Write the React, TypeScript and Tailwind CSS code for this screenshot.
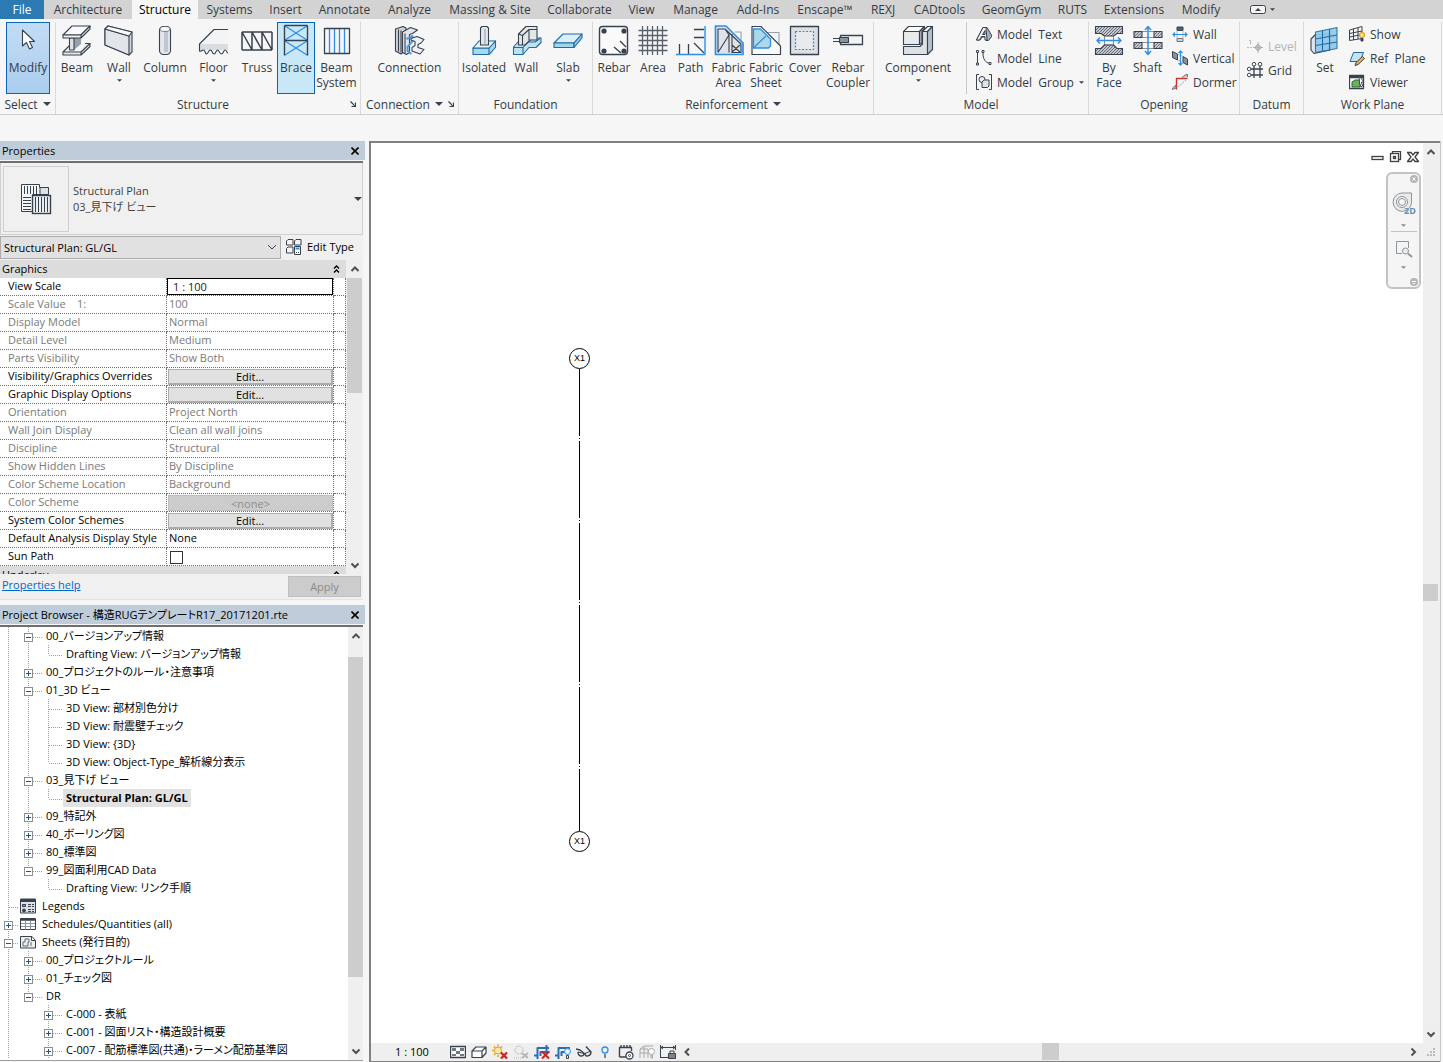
import React from "react";

type Kids = { children?: React.ReactNode };

const INK = "#38424f";
const BLUE = "#2f8fe8";

/* ---------- icon frames ---------- */

function Big({ children }: Kids) {
  return (
    <svg viewBox="0 0 32 32" className="h-8 w-8 shrink-0" fill="none" stroke={INK} strokeWidth="1.1" strokeLinejoin="round" aria-hidden="true">
      {children}
    </svg>
  );
}

function Small({ children }: Kids) {
  return (
    <svg viewBox="0 0 16 16" className="h-4 w-4 shrink-0" fill="none" stroke={INK} strokeWidth="1" strokeLinejoin="round" aria-hidden="true">
      {children}
    </svg>
  );
}

function Hatch({ id, color = "#5d646c" }: { id: string; color?: string }) {
  return (
    <pattern id={id} width="3" height="3" patternUnits="userSpaceOnUse">
      <rect width="3" height="3" fill="#c3c7cc" stroke="none" />
      <path d="M0 3L3 0" stroke={color} strokeWidth="0.8" />
    </pattern>
  );
}

function Triangle({ small = false }: { small?: boolean }) {
  return (
    <svg viewBox="0 0 8 4" className={small ? "h-[3px] w-[5px]" : "h-1 w-2"} fill={INK} aria-hidden="true">
      <path d="M0 0h8L4 4z" />
    </svg>
  );
}

function Launcher() {
  return (
    <svg viewBox="0 0 6 6" className="h-1.5 w-1.5" fill="none" stroke={INK} aria-hidden="true">
      <path d="M0.500 0.500L5 5M5.500 1.500v4h-4" strokeWidth="1.200" />
    </svg>
  );
}

function Chevron({ dir }: { dir: "up" | "down" | "left" | "right" }) {
  const paths = {
    up: "M1.500 7L5 3.500L8.500 7",
    down: "M1.500 3.500L5 7L8.500 3.500",
    left: "M7 1.500L3.500 5L7 8.500",
    right: "M3.500 1.500L7 5L3.500 8.500",
  };
  return (
    <svg viewBox="0 0 10 10" className="h-2.5 w-2.5" fill="none" stroke="#505050" strokeWidth="2" aria-hidden="true">
      <path d={paths[dir]} />
    </svg>
  );
}

/* ---------- ribbon icons ---------- */

const icons = {
  cursor: (
    <Big>
      <path d="M10.500 6v16l4-3.500 3 6.500 3-1.500-3-6h5z" fill="#fff" />
    </Big>
  ),
  beam: (
    <Big>
      <path d="M20 13v7L13 26V13z" fill="#98a0a9" stroke="none" />
      <path d="M2 28l6-6h3M20 28v3H2v-3h18l9-8.500v3L20 31M20 28l9-8.500h-5" fill="#e9ecef" />
      <path d="M8.500 14h4.500v12H8.500z" fill="#dfe3e7" />
      <path d="M2 11l9-9h18l-9 9z" fill="#f8f9fa" />
      <path d="M2 11h18v3H2zM20 11l9-9v3l-9 9" fill="#eceef1" />
    </Big>
  ),
  wall: (
    <Big>
      <path d="M2 5l3-3 24 6v20l-3 3L2 21z" fill="#d3d8de" />
      <path d="M2 5l24 7v19L2 21z" fill="#e2e5e9" />
      <path d="M2 5l3-3 24 6-3 4z" fill="#fafafa" />
    </Big>
  ),
  column: (
    <Big>
      <rect x="10.500" y="2.500" width="11" height="28" rx="4" fill="#e4e7ea" />
      <rect x="15" y="7" width="4" height="21" fill="#bfc6cd" stroke="none" />
      <ellipse cx="16" cy="5" rx="5" ry="2.500" fill="#fafafa" strokeWidth="0.600" />
    </Big>
  ),
  floor: (
    <Big>
      <path d="M1.500 20L16 5.500h14V29c-1.500 0-1.500-3-3-3s-2 4-4 4-1.500-4-3.500-4-2 4-4 4-1.500-4-3.500-4-1.500 4-3.500 4-1-4-3-4-2 2-3.500 1z" fill="#f3f4f6" stroke="none" />
      <path d="M1.500 20H30v6H1.500z" fill="#d9dde1" stroke="none" />
      <path d="M30 5.500H16L1.500 20v7c1.500 1 2-1 4-1s1.500 4 3 4 2-4 4-4 1.500 4 3.500 4 2-4 3.500-4 2 4 4 4 2-4 3.500-4 2 3 3 3" />
    </Big>
  ),
  truss: (
    <Big>
      <path d="M1 8h30M1 26h30M1 8v18M11 8v18M21 8v18M31 8v18M1 8l10 18M11 8l10 18M21 8l10 18" strokeWidth="1.500" />
    </Big>
  ),
  brace: (
    <Big>
      <path d="M5 2l22 14M27 2L5 16M5 17l22 14M27 17L5 31" stroke={BLUE} strokeWidth="1.300" />
      <path d="M4.500 1.500v30M27.500 1.500v30M4.500 1.500h23M4.500 16.500h23" strokeWidth="1.400" />
    </Big>
  ),
  beamSystem: (
    <Big>
      <path d="M8.500 5v24M13.500 5v24M18.500 5v24M23.500 5v24" stroke={BLUE} strokeWidth="1.300" />
      <rect x="3.500" y="4.500" width="25" height="25" strokeWidth="1.300" />
    </Big>
  ),
  connection: (
    <Big>
      <path d="M1.500 5L9 2.500l3 1.500v22l-5 4-5.500-3z" fill="#cfd4da" />
      <path d="M4.500 5.500v22M7 6.500v22" />
      <path d="M8.500 8l8-4.500 7 2.500-5 3.500-3 1v18l-3 2-4-2z" fill="#e2e5e9" />
      <path d="M11 9.500v20" />
      <path d="M12.500 15l6-3v5l-5 6v4l4 3" stroke="#4d9be8" strokeWidth="2" />
      <path d="M17 14.500l6-2 7 3-3 3.500-3 1.500v3l6 2-4 4.500-8-3v-3.500l3-2v-4l-4-1.500z" fill="#eef2f7" />
    </Big>
  ),
  isolated: (
    <Big>
      <path d="M5 24l6-8h17l-3 8v6.500H5z" fill="#c9e8f4" stroke="none" />
      <path d="M5 24h16l6.500-7v6.500L21 30.500H5zM21 24v6.500" fill="#a8d8ea" stroke="#1f6aa8" />
      <path d="M5 24l6-7h16.500L21 24z" fill="#e4f4fa" stroke="#1f6aa8" />
      <path d="M12.500 4l1.500-1.500h5L20.500 4v17h-8z" fill="#e4e7ea" />
      <path d="M16 5h2v15h-2z" fill="#b8bfc7" stroke="none" />
    </Big>
  ),
  wallFooting: (
    <Big>
      <path d="M2.500 23l4.500-5 9 1 5-5h9v4.500l-5 5h-7l-6 7H2.500z" fill="#bfe2f0" stroke="#1f6aa8" />
      <path d="M2.500 23.500H12l5-5.500h7l5.500-4M12 23.500v6.500" stroke="#1f6aa8" />
      <path d="M7.500 10L15 2.500h11V16h-7l-5 5H7.500z" fill="#e4e7ea" />
      <path d="M7.500 10l4 1.500V21M11.500 11.500L18 5.500h8M18 5.500V16" />
    </Big>
  ),
  slab: (
    <Big>
      <path d="M2 19L11 10h19l-8 9z" fill="#d9f0f8" stroke="#1f6aa8" />
      <path d="M2 19h20v4.500H2z" fill="#a3d6ea" stroke="#1f6aa8" />
      <path d="M22 19l8-9v4l-8 9.500z" fill="#8fc7e0" stroke="#1f6aa8" />
    </Big>
  ),
  rebar: (
    <Big>
      <rect x="1.500" y="2.500" width="28" height="28" rx="3" strokeWidth="1.400" fill="#fafafa" />
      <g fill={INK} stroke="none">
        <circle cx="6" cy="7" r="2.600" />
        <circle cx="26" cy="7" r="2.600" />
        <circle cx="6" cy="27" r="2.600" />
        <circle cx="26" cy="27" r="2.600" />
      </g>
      <path d="M16 23l7 6M22 17l6 6" strokeWidth="1.400" />
    </Big>
  ),
  area: (
    <Big>
      <path d="M5.500 2v29M10.500 2v29M15.500 2v29M20.500 2v29M25.500 2v29M1.500 6.500h29M1.500 11.500h29M1.500 16.500h29M1.500 21.500h29M1.500 26.500h29" strokeWidth="1.300" stroke="#59616b" />
    </Big>
  ),
  path: (
    <Big>
      <path d="M19 5.500h10M19 13.500h10M4.500 20v10M13.500 20v10M19 19l10 10" strokeWidth="1.300" />
      <path d="M1 30.500h29V2" stroke={BLUE} strokeWidth="1.400" />
    </Big>
  ),
  fabricArea: (
    <Big>
      <path d="M22 8h6v14" stroke="#9aa1a9" />
      <path d="M2.500 2H13l17 17v11.500H2.500z" fill="#dfe3e8" stroke={BLUE} strokeWidth="1.700" />
      <path d="M5 28.500V5h7l4 6L5 28.500M16 10v18.500M19 10v18.500h9V20L12 5M19 21l8 7M19 28l8-7" strokeWidth="1.100" />
    </Big>
  ),
  fabricSheet: (
    <Big>
      <path d="M13 8.500h16V20" stroke="#9aa1a9" />
      <path d="M2 2.500h9L30.500 22v8.500H2z" strokeWidth="1.200" fill="#f8f9fa" />
      <path d="M3.500 5h7l10 10v7l-2 2h-15z" fill="#acd8ea" stroke={BLUE} strokeWidth="1.300" />
      <path d="M3.500 24L16 12" stroke={BLUE} strokeWidth="1.300" />
    </Big>
  ),
  cover: (
    <Big>
      <rect x="1.500" y="2.500" width="28" height="28" fill="#dcdfe4" strokeWidth="1.300" />
      <rect x="6.500" y="7.500" width="18" height="18" stroke={BLUE} strokeWidth="1.200" strokeDasharray="2 1.500" fill="#e8eaed" />
    </Big>
  ),
  coupler: (
    <Big>
      <rect x="8.500" y="11.500" width="22" height="9" strokeWidth="1.300" fill="#f3f4f5" />
      <path d="M1 14.500h8M1 17.500h8" />
      <rect x="7.500" y="13.500" width="9" height="5" fill="#8a929b" />
    </Big>
  ),
  component: (
    <Big>
      <path d="M1.500 7.500h16v13h-16z" fill="#e8eaed" />
      <path d="M1.500 7.500l5-5h16l-5 5z" fill="#fcfcfc" />
      <path d="M17.500 7.500l5-5V5l-2.500 2.500V19l-2.500 1.500z" fill="#a9b1ba" />
      <path d="M20.500 7.500h5v23h-24v-8H18l2.500-2.500z" fill="#dde0e4" />
      <path d="M20.500 7.500l5-5h5l-5 5z" fill="#fcfcfc" />
      <path d="M25.500 7.500l5-5v23l-5 5z" fill="#b7bfc8" />
    </Big>
  ),
  byFace: (
    <Big>
      <defs><Hatch id="hatch-face" color="#4c545d" /></defs>
      <path d="M11.500 11h9v10h-9z" fill="#f7f7f7" stroke="#8c939b" />
      <path d="M2.500 2.500h27v7H24l-3.500 2.500h-9L8 9.500H2.500zM2.500 30.500h27v-6H24L20.500 21h-9L8 24.500H2.500z" fill="url(#hatch-face)" />
      <path d="M4 16.500h24M7 13.500l-3 3 3 3M25 13.500l3 3-3 3" stroke={BLUE} strokeWidth="1.500" />
    </Big>
  ),
  shaft: (
    <Big>
      <defs><Hatch id="hatch-shaft" /></defs>
      <path d="M2 7.500h28M2 13.500h28M2 18.500h28M2 24.500h28" stroke="#8c939b" />
      <path d="M2 7.500h8v6H2zM22 7.500h8v6h-8zM2 18.500h8v6H2zM22 18.500h8v6h-8z" fill="url(#hatch-shaft)" />
      <path d="M16 3v27M13 6l3-3.500L19 6M13 27l3 3.500 3-3.500" stroke={BLUE} strokeWidth="1.500" />
    </Big>
  ),
  set: (
    <Big>
      <path d="M2 15l4-4 15-1v16L5 29.500 2 26z" fill="#dfe5ea" />
      <path d="M6.500 8L28 3.500v21L6.500 28.500z" fill="#8ec9e8" stroke="#1f6aa8" opacity="0.900" />
      <path d="M13.500 6.500v20.500M20.500 5v21M6.500 15L28 11M6.500 21.500L28 18" stroke="#1f6aa8" />
    </Big>
  ),
  text: (
    <Small>
      <path d="M0.500 14L7 1.500h4L16 10l-3.500 4.500H10V11H6l-2 3z" fill="#a9b1ba" />
      <path d="M0.500 14L7 1.500h3l1 12.500H9V10.500H5.500L3.500 14zM6.500 8.500H9V4.500z" fill="#f4f5f6" />
    </Small>
  ),
  line: (
    <Small>
      <path d="M1.500 3v10M7 3c0 6 2 9.500 7 10.500" />
      <path d="M0.500 0.500h2v2h-2zM0.500 13h2v2h-2zM6 0.500h2v2H6zM13 12.500h2v2h-2z" fill="#fff" />
    </Small>
  ),
  group: (
    <Small>
      <path d="M3 0.500H0.500v15H3M13 0.500h2.500v15H13" />
      <circle cx="6" cy="5.500" r="3" fill="#eceef0" />
      <path d="M6 8l2-2h5v6l-1.500 1.500H6z" fill="#dfe3e7" />
    </Small>
  ),
  openWall: (
    <Small>
      <path d="M5 1h6v3.500H5z" fill="#555d66" />
      <path d="M5 12.500h6v3H5z" fill="#d0d4d8" stroke="#6d757e" />
      <path d="M5 4.500v8M11 4.500v8" stroke="#b5bac0" />
      <path d="M1 8.500h14M3 6.500l-2 2 2 2M13 6.500l2 2-2 2" stroke={BLUE} strokeWidth="1.200" />
    </Small>
  ),
  vertical: (
    <Small>
      <path d="M0.500 1.500l5 2.500v6l-5-2.500zM11 6.500l4.500 2.500v6L11 12.500z" fill="#8a929b" />
      <path d="M5.500 4l5.500 2.500M5.500 10l5.500 2.500" stroke="#b5bac0" />
      <path d="M8.500 1v14M6.500 3l2-2 2 2M6.500 13l2 2 2-2" stroke={BLUE} strokeWidth="1.200" />
    </Small>
  ),
  dormer: (
    <Small>
      <path d="M10 3.500L14 0.500h1.500v2.500M0.500 15.500V14l3.500-3v3z" stroke="#6d757e" fill="#c5cad0" />
      <path d="M6 13L14 6" stroke="#9aa1a9" strokeDasharray="2 1" />
      <path d="M15.500 4.500h-11v11" stroke="#c8372d" strokeWidth="1.400" />
    </Small>
  ),
  level: (
    <Small>
      <path d="M0 9.500h7" stroke="#bdbdbd" strokeDasharray="2 1" />
      <path d="M2 2.500h1.500v4" stroke="#bdbdbd" />
      <path d="M11 6l3.500 3.500L11 13 7.500 9.500zM11 4v11M6 9.500h10" stroke="#b0b0b0" fill="#c4c4c4" />
    </Small>
  ),
  grid: (
    <Small>
      <path d="M7 4v12M13 4v12M4 7h12M4 13h12" strokeWidth="1.300" />
      <g fill="#fff">
        <circle cx="7" cy="2.200" r="1.800" />
        <circle cx="13" cy="2.200" r="1.800" />
        <circle cx="2.200" cy="7" r="1.800" />
        <circle cx="2.200" cy="13" r="1.800" />
      </g>
    </Small>
  ),
  show: (
    <Small>
      <path d="M0.500 4L13 0.500v12L0.500 14.500zM4.500 3v11M9 2v11M0.500 7.500L13 5M0.500 11L13 8.500" />
      <circle cx="13" cy="9" r="2.500" fill="#ffe48a" stroke="#e39a1c" strokeWidth="1.200" />
      <path d="M12 12.500h2v2.500h-2z" fill={INK} />
    </Small>
  ),
  refPlane: (
    <Small>
      <path d="M4.500 2.500h10l-3.500 9H1z" fill="#c4e2f2" stroke="#1f6aa8" />
      <path d="M13.500 6.500l2 2L9 14.500 6 15.500l1-3z" fill="#f2b33d" />
    </Small>
  ),
  viewer: (
    <Small>
      <rect x="0.500" y="1.500" width="14" height="13" fill="#fff" strokeWidth="1.300" />
      <path d="M1 3h13" strokeWidth="2.500" />
      <path d="M3 8l3-2h5v7H3z" fill="#6fae5f" stroke="#2e6a2b" />
      <path d="M10 2l5 6h-2.500l1 4-1.500 1-1.500-4z" fill="#fff" />
    </Small>
  ),
};

/* ---------- ribbon ---------- */

const tabs: [string, string][] = [
  ["Systems", "w-[63px]"],
  ["Insert", "w-[49px]"],
  ["Annotate", "w-[69px]"],
  ["Analyze", "w-[61px]"],
  ["Massing & Site", "w-[100px]"],
  ["Collaborate", "w-[79px]"],
  ["View", "w-[45px]"],
  ["Manage", "w-[63px]"],
  ["Add-Ins", "w-[62px]"],
  ["Enscape™", "w-[72px]"],
  ["REXJ", "w-[44px]"],
  ["CADtools", "w-[69px]"],
  ["GeomGym", "w-[75px]"],
  ["RUTS", "w-[47px]"],
  ["Extensions", "w-[76px]"],
  ["Modify", "w-[58px]"],
];

function Tool({ icon, label, width, menu = false, state = "border-transparent" }: { icon: React.ReactNode; label: string; width: string; menu?: boolean; state?: string }) {
  return (
    <button type="button" className={`flex h-[72px] shrink-0 flex-col items-center border pt-px ${width} ${state}`}>
      {icon}
      <span className="mt-1 text-center leading-[15px] whitespace-pre">{label}</span>
      {menu && <span className="mt-1"><Triangle small /></span>}
    </button>
  );
}

function Row({ icon, label, menu = false, disabled = false }: { icon: React.ReactNode; label: string; menu?: boolean; disabled?: boolean }) {
  return (
    <button type="button" disabled={disabled} className={`flex h-6 items-center gap-[5px] whitespace-pre ${disabled ? "text-[#b4b4b4]" : ""}`}>
      {icon}
      <span>{label}</span>
      {menu && <Triangle small />}
    </button>
  );
}

function Panel({ title, width, menu = false, launcher = false, children }: Kids & { title: string; width: string; menu?: boolean; launcher?: boolean }) {
  return (
    <section aria-label={title} className={`flex shrink-0 flex-col border-r border-[#d9d9d9] ${width}`}>
      <div className="flex h-[72px]">{children}</div>
      <div className="flex h-5 items-center">
        <span className="flex flex-1 items-center justify-center gap-[5px]">
          {title}
          {menu && <Triangle />}
        </span>
        {launcher && <button type="button" aria-label={`${title} settings`} className="mr-1"><Launcher /></button>}
      </div>
    </section>
  );
}

function Ribbon() {
  return (
    <header className="text-[#333b46]">
      <nav aria-label="Ribbon tabs" className="flex h-[19px] bg-[#d3d3d3] leading-[18px]">
        <button type="button" className="w-11 shrink-0 bg-[#2b7ab2] text-white">File</button>
        <button type="button" className="w-[88px] shrink-0">Architecture</button>
        <button type="button" className="w-[66px] shrink-0 bg-[#f6f6f6] text-black">Structure</button>
        {tabs.map(([name, width]) => (
          <button key={name} type="button" className={`shrink-0 whitespace-nowrap ${width}`}>{name}</button>
        ))}
        <button type="button" aria-label="Minimize ribbon" className="ml-5 flex items-center gap-1">
          <svg viewBox="0 0 16 9" className="h-[9px] w-4" fill="none" stroke={INK} aria-hidden="true">
            <rect x="0.500" y="0.500" width="15" height="8" rx="2" fill="#f3f3f3" />
            <path d="M5 6l3-3 3 3z" fill={INK} stroke="none" />
          </svg>
          <Triangle small />
        </button>
      </nav>
      <div className="flex border-b border-[#cfcfcf] pt-[3px]">
        <Panel title="Select" width="w-14" menu>
          <Tool icon={icons.cursor} label="Modify" width="ml-1.5 w-11" state="border-[#0b66b8] bg-linear-to-b from-[#c3dcf5] to-[#abcdee]" />
        </Panel>
        <Panel title="Structure" width="w-[305px]" launcher>
          <Tool icon={icons.beam} label="Beam" width="w-[42px]" />
          <Tool icon={icons.wall} label="Wall" width="w-[42px]" menu />
          <Tool icon={icons.column} label="Column" width="w-[50px]" />
          <Tool icon={icons.floor} label="Floor" width="w-[47px]" menu />
          <Tool icon={icons.truss} label="Truss" width="w-10" />
          <Tool icon={icons.brace} label="Brace" width="w-[38px]" state="border-[#0b66b8] bg-[#c9e8f7]" />
          <Tool icon={icons.beamSystem} label={"Beam\nSystem"} width="w-[43px]" />
        </Panel>
        <Panel title="Connection" width="w-[98px]" menu launcher>
          <Tool icon={icons.connection} label="Connection" width="w-full" />
        </Panel>
        <Panel title="Foundation" width="w-[134px]">
          <Tool icon={icons.isolated} label="Isolated" width="w-[50px]" />
          <Tool icon={icons.wallFooting} label="Wall" width="w-[35px]" />
          <Tool icon={icons.slab} label="Slab" width="w-12" menu />
        </Panel>
        <Panel title="Reinforcement" width="w-[281px]" menu>
          <Tool icon={icons.rebar} label="Rebar" width="w-[42px]" />
          <Tool icon={icons.area} label="Area" width="w-9" />
          <Tool icon={icons.path} label="Path" width="w-[39px]" />
          <Tool icon={icons.fabricArea} label={"Fabric\nArea"} width="w-[37px]" />
          <Tool icon={icons.fabricSheet} label={"Fabric\nSheet"} width="w-[38px]" />
          <Tool icon={icons.cover} label="Cover" width="w-10" />
          <Tool icon={icons.coupler} label={"Rebar\nCoupler"} width="w-[46px]" />
        </Panel>
        <Panel title="Model" width="w-[215px]">
          <Tool icon={icons.component} label="Component" width="w-[88px]" menu />
          <div className="ml-1 flex flex-col border-l border-[#c8c8c8] pl-[9px]">
            <Row icon={icons.text} label="Model  Text" />
            <Row icon={icons.line} label="Model  Line" />
            <Row icon={icons.group} label="Model  Group" menu />
          </div>
        </Panel>
        <Panel title="Opening" width="w-[151px]">
          <Tool icon={icons.byFace} label={"By\nFace"} width="w-10" />
          <Tool icon={icons.shaft} label="Shaft" width="w-[37px]" />
          <div className="ml-1.5 flex flex-col">
            <Row icon={icons.openWall} label="Wall" />
            <Row icon={icons.vertical} label="Vertical" />
            <Row icon={icons.dormer} label="Dormer" />
          </div>
        </Panel>
        <Panel title="Datum" width="w-16">
          <div className="ml-[7px] flex flex-col justify-center">
            <Row icon={icons.level} label="Level" disabled />
            <Row icon={icons.grid} label="Grid" />
          </div>
        </Panel>
        <Panel title="Work Plane" width="w-[138px]">
          <Tool icon={icons.set} label="Set" width="w-[42px]" />
          <div className="ml-[3px] flex flex-col">
            <Row icon={icons.show} label="Show" />
            <Row icon={icons.refPlane} label="Ref  Plane" />
            <Row icon={icons.viewer} label="Viewer" />
          </div>
        </Panel>
      </div>
    </header>
  );
}

/* ---------- shared docking parts ---------- */

function DockTitle({ title }: { title: string }) {
  return (
    <div className="flex h-[19px] w-[365px] items-center justify-between bg-[#bfcddb] pr-1.5 pl-0.5 text-black">
      <h2 className="whitespace-nowrap">{title}</h2>
      <button type="button" aria-label="Close panel">
        <svg viewBox="0 0 8 8" className="h-2 w-2" stroke="#000" strokeWidth="1.600" aria-hidden="true">
          <path d="M0.500 0.500l7 7M7.500 0.500l-7 7" />
        </svg>
      </button>
    </div>
  );
}

function VScroll({ before, thumb }: { before: string; thumb: string }) {
  return (
    <div className="flex w-[15px] shrink-0 flex-col items-center bg-[#efefef]">
      <button type="button" aria-label="Scroll up" className="flex h-[18px] items-center"><Chevron dir="up" /></button>
      <div className={before} />
      <div className={`w-full bg-[#cdcdcd] ${thumb}`} />
      <div className="flex-1" />
      <button type="button" aria-label="Scroll down" className="flex h-[18px] items-center"><Chevron dir="down" /></button>
    </div>
  );
}

/* ---------- properties ---------- */

type Prop = { name: string; value: string; kind?: "text" | "off" | "input" | "edit" | "none" | "check" };

const props: Prop[] = [
  { name: "View Scale", value: "1 : 100", kind: "input" },
  { name: "Scale Value    1:", value: "100", kind: "off" },
  { name: "Display Model", value: "Normal", kind: "off" },
  { name: "Detail Level", value: "Medium", kind: "off" },
  { name: "Parts Visibility", value: "Show Both", kind: "off" },
  { name: "Visibility/Graphics Overrides", value: "Edit...", kind: "edit" },
  { name: "Graphic Display Options", value: "Edit...", kind: "edit" },
  { name: "Orientation", value: "Project North", kind: "off" },
  { name: "Wall Join Display", value: "Clean all wall joins", kind: "off" },
  { name: "Discipline", value: "Structural", kind: "off" },
  { name: "Show Hidden Lines", value: "By Discipline", kind: "off" },
  { name: "Color Scheme Location", value: "Background", kind: "off" },
  { name: "Color Scheme", value: "<none>", kind: "none" },
  { name: "System Color Schemes", value: "Edit...", kind: "edit" },
  { name: "Default Analysis Display Style", value: "None", kind: "text" },
  { name: "Sun Path", value: "", kind: "check" },
];

function PropValue({ p, id }: { p: Prop; id: string }) {
  if (p.kind === "input")
    return <input id={id} defaultValue={p.value} className="block h-[17px] w-full border border-black bg-white px-[5px] text-[#222]" />;
  if (p.kind === "edit")
    return (
      <div className="pt-px pl-px">
        <button id={id} type="button" className="block h-4 w-full border border-r-2 border-b-2 border-[#adadad] bg-[#e1e1e1] leading-[13px]">{p.value}</button>
      </div>
    );
  if (p.kind === "none")
    return (
      <div className="pt-px pl-px">
        <button id={id} type="button" disabled className="block h-4 w-full border border-[#bfbfbf] bg-[#cccccc] leading-[13px] text-[#8c8c8c]">{p.value}</button>
      </div>
    );
  if (p.kind === "check")
    return <input id={id} type="checkbox" className="mt-[3px] ml-[3px] block h-[13px] w-[13px] appearance-none border border-[#333] bg-white" />;
  return <span className="block pl-0.5 leading-4">{p.value}</span>;
}

function GroupRow({ name }: { name: string }) {
  return (
    <tr className="bg-[#dcdcdc]">
      <th scope="colgroup" colSpan={3} className="h-[18px] p-0 text-left font-normal">
        <div className="flex items-center justify-between pr-1.5 pl-0.5 leading-[18px]">
          {name}
          <svg viewBox="0 0 7 8" className="h-2 w-[7px]" fill="none" stroke="#000" strokeWidth="1.400" aria-hidden="true">
            <path d="M1 3.500l2.500-2.500L6 3.500M1 7.500L3.500 5 6 7.500" />
          </svg>
        </div>
      </th>
    </tr>
  );
}

function Properties() {
  return (
    <section aria-label="Properties" className="flex flex-col">
      <DockTitle title="Properties" />
      <div className="mt-px h-0.5 w-[363px] bg-[#6f6f6f]" />
      <div className="w-[363px] bg-[#f0f0f0]">
        <button type="button" className="flex w-full items-center border border-t-0 border-[#cfcfcf] pt-[3px] pb-0.5 pl-0.5 text-left">
          <span className="flex h-[66px] w-[66px] items-center justify-center border border-[#cfcfcf]">
            <svg viewBox="0 0 32 32" className="h-8 w-8" fill="none" stroke={INK} aria-hidden="true">
              <path d="M1.500 1.500h18v3h9v7h-16v17h-11z" fill="#f7f7f7" />
              <path d="M20 4.500h8.500v7H20z" fill="#dfe3e8" />
              <path d="M4.500 3v8M7.500 3v8M10.500 3v8M13.500 3v8M16.500 3v8M3 14.500h8M3 17.500h8M3 20.500h8M3 23.500h8M3 26.500h8" />
              <rect x="12.500" y="12.500" width="18" height="18" fill="#eceff2" strokeWidth="1.400" />
              <path d="M15.500 14v15M18.500 14v15M21.500 14v15M24.500 14v15M27.500 14v15" />
            </svg>
          </span>
          <span className="ml-1 flex-1 leading-4 text-[#404040]">Structural Plan<br />03_見下げ ビュー</span>
          <span><Triangle /></span>
        </button>
        <div className="flex h-[25px] items-center gap-[5px]">
          <div className="relative">
            <select aria-label="Instance" className="block h-[23px] w-[281px] appearance-none border border-[#adadad] bg-[#e1e1e1] pl-[3px] text-black">
              <option>Structural Plan: GL/GL</option>
            </select>
            <svg viewBox="0 0 10 6" className="pointer-events-none absolute top-2 right-1 h-1.5 w-2.5" fill="none" stroke="#404040" aria-hidden="true">
              <path d="M1 1l4 4 4-4" />
            </svg>
          </div>
          <button type="button" className="flex items-center gap-[5px] pb-0.5">
            <Small>
              <path d="M0.500 2l1.500-1.500h5V6H0.500zM8.500 2L10 0.500h5V6H8.500zM0.500 9.500L2 8h5v6H0.500z" fill="#f4f4f4" />
              <rect x="8.500" y="7.500" width="6" height="8" fill="#fff" />
              <path d="M9.500 9.500h4" stroke={BLUE} strokeWidth="2" />
              <path d="M10 13.500h3" strokeDasharray="1 1" />
            </Small>
            Edit Type
          </button>
        </div>
        <div className="flex h-[314px] overflow-hidden">
          <table className="h-fit w-[346px] shrink-0 table-fixed border-separate border-spacing-0 bg-white">
            <colgroup>
              <col className="w-[167px]" />
              <col className="w-[167px]" />
              <col />
            </colgroup>
            <tbody>
              <GroupRow name="Graphics" />
              {props.map((p, i) => {
                const off = p.kind === "off" || p.kind === "none";
                return (
                  <tr key={p.name} className={off ? "text-[#7a7a7a]" : "text-black"}>
                    <th scope="row" className="h-[18px] border-r border-b border-dotted border-[#707070] p-0 pl-2 text-left align-top font-normal whitespace-pre">
                      <label htmlFor={`prop-${i}`} className="block leading-4">{p.name}</label>
                    </th>
                    <td className="h-[18px] border-r border-b border-dotted border-[#707070] p-0 align-top">
                      <PropValue p={p} id={`prop-${i}`} />
                    </td>
                    <td className="border-r border-b border-dotted border-[#707070] p-0" />
                  </tr>
                );
              })}
              <GroupRow name="Underlay" />
            </tbody>
          </table>
          <div className="ml-px flex"><VScroll before="h-0" thumb="h-[115px]" /></div>
        </div>
        <div className="flex h-[26px] items-start justify-between border-b border-[#e3e3e3] px-0.5 pt-0.5">
          <a href="#help" className="leading-[18px] text-[#0066cc] underline">Properties help</a>
          <button type="button" disabled className="h-[21px] w-[73px] border border-[#bfbfbf] bg-[#cccccc] text-[#8a8a8a]">Apply</button>
        </div>
      </div>
    </section>
  );
}

/* ---------- project browser ---------- */

/*
 * Each letter of `cells` is one tree column:
 * v line, s space, t branch, l last branch, p/m toggle closed/open, P/M same but last child.
 */
type Node = { cells: string; label: string; icon?: "legend" | "schedule" | "sheet"; selected?: boolean };

const nodes: Node[] = [
  { cells: "vm", label: "00_バージョンアップ情報" },
  { cells: "vvl", label: "Drafting View: バージョンアップ情報" },
  { cells: "vp", label: "00_プロジェクトのルール・注意事項" },
  { cells: "vm", label: "01_3D ビュー" },
  { cells: "vvt", label: "3D View: 部材別色分け" },
  { cells: "vvt", label: "3D View: 耐震壁チェック" },
  { cells: "vvt", label: "3D View: {3D}" },
  { cells: "vvl", label: "3D View: Object-Type_解析線分表示" },
  { cells: "vm", label: "03_見下げ ビュー" },
  { cells: "vvl", label: "Structural Plan: GL/GL", selected: true },
  { cells: "vp", label: "09_特記外" },
  { cells: "vp", label: "40_ボーリング図" },
  { cells: "vp", label: "80_標準図" },
  { cells: "vM", label: "99_図面利用CAD Data" },
  { cells: "vsl", label: "Drafting View: リンク手順" },
  { cells: "t", label: "Legends", icon: "legend" },
  { cells: "p", label: "Schedules/Quantities (all)", icon: "schedule" },
  { cells: "m", label: "Sheets (発行目的)", icon: "sheet" },
  { cells: "vp", label: "00_プロジェクトルール" },
  { cells: "vp", label: "01_チェック図" },
  { cells: "vM", label: "DR" },
  { cells: "vsp", label: "C-000 - 表紙" },
  { cells: "vsp", label: "C-001 - 図面リスト・構造設計概要" },
  { cells: "vsp", label: "C-007 - 配筋標準図(共通)・ラーメン配筋基準図" },
];

function Cell({ kind, wide }: { kind: string; wide: boolean }) {
  const toggle = "pmPM".includes(kind);
  const down = "vtpm".includes(kind);
  const up = kind !== "s";
  return (
    <svg width={wide ? 26 : 20} height="18" className="shrink-0" fill="none" stroke="#a0a0a0" shapeRendering="crispEdges" aria-hidden="true">
      {up && <path d={down ? "M8.500 0v18" : "M8.500 0v10"} strokeDasharray="1 1" />}
      {kind !== "v" && kind !== "s" && <path d={wide ? "M9 10.500h14" : "M9 10.500h10"} strokeDasharray="1 1" />}
      {toggle && (
        <>
          <rect x="4.500" y="6.500" width="8" height="8" fill="#fff" stroke="#8e8e8e" />
          <path d={kind.toLowerCase() === "p" ? "M6 10.500h5M8.500 8v5" : "M6 10.500h5"} stroke="#2c4f8f" />
        </>
      )}
    </svg>
  );
}

const nodeIcons = {
  legend: (
    <Small>
      <rect x="0.500" y="1" width="15" height="14" fill="#dfe3e8" />
      <path d="M0.500 2.500h15" strokeWidth="3" />
      <path d="M2.500 6.500h3v2h-3z" fill="#8a929b" />
      <circle cx="4" cy="12.500" r="1.500" fill={INK} />
      <path d="M8 6.500h6M8 8.500h6M8 11.500h6M8 13.500h6" strokeDasharray="3 1" />
    </Small>
  ),
  schedule: (
    <Small>
      <rect x="0.500" y="2.500" width="15" height="11" fill="#fff" />
      <path d="M0.500 3.500h15" strokeWidth="2.500" />
      <path d="M1 7.500h14M1 10.500h14M5.500 5v8.500M10.500 5v8.500" stroke="#8b939c" />
    </Small>
  ),
  sheet: (
    <Small>
      <path d="M0.500 2.500H12l3.500 4v7.500h-15zM11.500 2.500v4h4" fill="#eceef0" />
      <path d="M5 5h4v3H8v4H3V8h2zM11 8v4" stroke="#5e6873" />
    </Small>
  ),
};

function Browser() {
  return (
    <section aria-label="Project Browser" className="mt-[5px] flex flex-1 flex-col">
      <DockTitle title="Project Browser - 構造RUGテンプレートR17_20171201.rte" />
      <div className="mt-px h-0.5 w-[363px] bg-[#6f6f6f]" />
      <div className="flex w-[363px] flex-1 border-b border-[#a0a0a0] bg-white">
        <ul role="tree" aria-label="Views" className="min-w-0 flex-1 overflow-hidden text-black">
          {nodes.map((n) => (
            <li key={n.label} role="treeitem" className="flex h-[18px] items-center leading-4 whitespace-pre">
              {n.cells.split("").map((c, i) => (
                <Cell key={i} kind={c} wide={!n.icon && i === n.cells.length - 1} />
              ))}
              {n.icon && <span className="mr-1.5">{nodeIcons[n.icon]}</span>}
              {n.selected ? <span className="-ml-[3px] bg-[#e2e2e2] px-[3px] leading-[18px] font-bold">{n.label}</span> : <span>{n.label}</span>}
            </li>
          ))}
        </ul>
        <VScroll before="h-3" thumb="h-80" />
      </div>
    </section>
  );
}

/* ---------- drawing area ---------- */

function Bubble() {
  return <span className="flex h-[21px] w-[21px] items-center justify-center rounded-full border border-black font-['Liberation_Sans'] text-[9px] leading-none">X1</span>;
}

function NavBar() {
  return (
    <div className="absolute top-[29px] right-0.5 flex h-[117px] w-[35px] flex-col items-center rounded-md border-2 border-[#c3c3c3] bg-[#f5f5f5]">
      <button type="button" aria-label="Close navigation bar" className="self-end">
        <svg viewBox="0 0 10 10" className="h-2.5 w-2.5" stroke="#fff" aria-hidden="true">
          <circle cx="5" cy="5" r="4" fill="#b5b5b5" stroke="none" />
          <path d="M3.500 3.500l3 3M6.500 3.500l-3 3" />
        </svg>
      </button>
      <button type="button" aria-label="Steering wheel" className="mt-2 flex flex-col items-center">
        <svg viewBox="0 0 24 24" className="h-6 w-6 overflow-visible" fill="none" stroke="#8f959b" aria-hidden="true">
          <path d="M10 1h9.500v9A9.200 9.200 0 1 1 10 1z" fill="#e8eaec" />
          <circle cx="10" cy="10" r="5.500" fill="#f5f5f5" />
          <circle cx="10" cy="10" r="3.500" />
          <text x="12" y="22" fill="#5f8fb8" stroke="none" fontSize="9" fontWeight="700" fontFamily="Open Sans">2D</text>
        </svg>
        <span className="mt-2 flex opacity-60"><Triangle small /></span>
      </button>
      <div className="mt-1 h-px w-[26px] bg-[#c3c3c3]" />
      <button type="button" aria-label="Zoom in region" className="mt-2 flex flex-col items-center">
        <svg viewBox="0 0 18 18" className="h-[18px] w-[18px]" fill="none" stroke="#8f959b" aria-hidden="true">
          <path d="M7 13.500H1.500v-12h12V8" />
          <circle cx="10.500" cy="11" r="3" fill="#e5eef5" />
          <path d="M13 13.500l4 3.500" strokeWidth="1.800" />
        </svg>
        <span className="mt-2 flex opacity-60"><Triangle small /></span>
      </button>
      <button type="button" aria-label="Navigation bar options" className="mt-auto self-end">
        <svg viewBox="0 0 10 10" className="h-2.5 w-2.5" stroke="#fff" aria-hidden="true">
          <circle cx="5" cy="5" r="4" fill="#b5b5b5" stroke="none" />
          <path d="M3 4.500h4M4 6.500h2" />
        </svg>
      </button>
    </div>
  );
}

function WindowButtons() {
  return (
    <div className="absolute top-2 right-1 flex h-3 items-center gap-[5px]">
      <button type="button" aria-label="Minimize view">
        <svg viewBox="0 0 13 12" className="h-3 w-[13px]" fill="#fff" stroke="#404040" strokeWidth="1.300" aria-hidden="true"><rect x="1" y="5.500" width="11" height="3" /></svg>
      </button>
      <button type="button" aria-label="Restore view">
        <svg viewBox="0 0 13 12" className="h-3 w-[13px]" fill="#fff" stroke="#404040" strokeWidth="1.300" aria-hidden="true">
          <rect x="3.500" y="0.500" width="8" height="8" />
          <rect x="1.500" y="2.500" width="8" height="8" />
          <rect x="4.500" y="5.500" width="2" height="2" />
        </svg>
      </button>
      <button type="button" aria-label="Close view">
        <svg viewBox="0 0 12 12" className="h-3 w-3" fill="#fff" stroke="#404040" strokeWidth="1.300" aria-hidden="true">
          <path d="M0.500 1.500h3.500l2 2.500 2-2.500h3.500L8 6l3.500 4.500H8L6 8l-2 2.500H0.500L4 6z" />
        </svg>
      </button>
    </div>
  );
}

const viewTools: [string, React.ReactNode][] = [
  ["Detail level", <Small key="a"><rect x="0.500" y="2.500" width="15" height="11" fill="#fff" strokeWidth="1.400" /><path d="M2 4h4v3H2zM10 4h4v3h-4zM6 7h4v3H6zM2 10h4v2H2zM10 10h4v2h-4z" fill="#6f7882" stroke="none" /></Small>],
  ["Visual style", <Small key="b"><path d="M1 7l4-4h10v6l-4 4.500H1zM1 7h10v6.500M11 7l4-4" fill="#fff" strokeWidth="1.200" /></Small>],
  ["Sun path", <Small key="c"><path d="M6 0.500v2M6 11v2M0 6.500h2M2 2.500l1.500 1.500M10 2.500L8.500 4M2 11l1.500-1.500" stroke="#e8a11a" strokeWidth="1.500" /><circle cx="6" cy="6.500" r="3.500" fill="#ffe9a0" stroke="#e8a11a" /><path d="M9 8.500l6 6M15 8.500l-6 6" stroke="#cf1f1f" strokeWidth="2.200" /></Small>],
  ["Shadows", <Small key="d"><g stroke="#b5b5b5"><path d="M1 14h7" strokeDasharray="1 1" /><circle cx="6" cy="6" r="4" strokeDasharray="2 1" /><path d="M9 9l6 5M15 9l-6 5" strokeWidth="1.800" /></g></Small>],
  ["Crop view", <Small key="e"><path d="M3.500 15V4h11.500M0 11.500h4M6.500 12V8h9M12.500 1v6" stroke="#2a6fb5" strokeWidth="2" /><path d="M8 7.500l7 7M15 7.500l-7 7" stroke="#cf1f1f" strokeWidth="2" /></Small>],
  ["Show crop region", <Small key="f"><path d="M3.500 15V4h11.500M0 11.500h4M6.500 12V8h3" stroke="#2a6fb5" strokeWidth="2" /><circle cx="12.500" cy="7.500" r="3" fill="#e5f3fc" stroke="#2f8fe8" /><path d="M11.500 11.500h2v3h-2z" /></Small>],
  ["Temporary hide", <Small key="g"><path d="M0 5l4 1 5 4M2 8c0 5 6 5 6 1.500M9 9.500c0 4 6 3 6-1.500L10 2.500" strokeWidth="1.400" /><path d="M2 8l6 1.500M9 9.500L15 7" /></Small>],
  ["Reveal hidden", <Small key="h"><circle cx="8" cy="6" r="3" fill="#e5f3fc" stroke="#2f8fe8" strokeWidth="1.300" /><path d="M7 10h2v4H7z" fill="#7c858f" stroke="none" /></Small>],
  ["View properties", <Small key="i"><path d="M1.500 13V3.500h12V7M3 1v3M6 1v3M9 1v3M12 1v3M1.500 13H8" strokeWidth="1.400" /><circle cx="11.500" cy="11.500" r="3.500" fill="#fff" strokeWidth="1.300" /><circle cx="11.500" cy="11.500" r="1" /></Small>],
  ["Analytical model", <Small key="j"><g stroke="#a8a8a8"><path d="M1 14V5l4-3h9M1 5h8v9M5 5v9M1 9h8M5 2v3" /><circle cx="12.500" cy="7.500" r="3" fill="#fff" /><path d="M12 11h1.500v3H12z" /></g></Small>],
  ["Constraints", <Small key="k"><path d="M0.500 1v13M15.500 1v5M1 3.500h14M3 2L1 3.500 3 5M13 2l2 1.500L13 5M1 13.500h7" /><rect x="8.500" y="9.500" width="7" height="5" fill="#7c858f" /><path d="M10 9V7h4v2" /></Small>],
];

function ViewArea() {
  return (
    <main className="flex min-w-0 flex-1 flex-col border-t-2 border-b border-l-2 border-[#808080] bg-[#efefef] pb-px">
      <div className="flex flex-1">
        <div className="relative min-w-0 flex-1 overflow-hidden bg-white">
          <div className="absolute top-[205px] left-[198px] flex flex-col items-center text-black">
            <Bubble />
            <svg width="3" height="462" shapeRendering="crispEdges" aria-hidden="true">
              <path d="M1.500 0v462" stroke="#000" strokeDasharray="67 2 1 2 77 2 1 2 77 2 1 2 77 2 1 2 77 2 1 2 70" />
            </svg>
            <Bubble />
          </div>
          <WindowButtons />
          <NavBar />
        </div>
        <VScroll before="h-[423px]" thumb="h-[17px]" />
        <div className="w-0.5" />
      </div>
      <div className="flex h-[17px] items-center">
        <span className="w-[79px] pl-6 text-[11px] whitespace-pre text-black">1 : 100</span>
        <div className="flex items-center gap-[5px]">
          {viewTools.map(([name, icon]) => (
            <button key={name} type="button" aria-label={name}>{icon}</button>
          ))}
        </div>
        <button type="button" aria-label="Scroll left" className="ml-1.5"><Chevron dir="left" /></button>
        <div className="flex h-full flex-1 justify-center">
          <div className="h-full w-[17px] bg-[#cdcdcd]" />
        </div>
        <button type="button" aria-label="Scroll right" className="mr-2"><Chevron dir="right" /></button>
        <svg viewBox="0 0 9 9" className="mr-[5px] h-[9px] w-[9px]" fill="#bcbcbc" aria-hidden="true">
          <path d="M7 1h2v2H7zM4 4h2v2H4zM7 4h2v2H7zM1 7h2v2H1zM4 7h2v2H4zM7 7h2v2H7z" />
        </svg>
      </div>
    </main>
  );
}

export default function App() {
  return (
    <div className="flex min-h-screen flex-col overflow-hidden bg-[#f6f6f6] font-['Open_Sans','Noto_Sans_CJK_JP',sans-serif] text-[12px] leading-[15px] [font-feature-settings:'palt']">
      <Ribbon />
      <div className="flex flex-1 pt-[26px]">
        <aside className="flex w-[369px] shrink-0 flex-col pb-px text-[11px]">
          <Properties />
          <Browser />
        </aside>
        <ViewArea />
        <div className="w-[3px] border-l border-[#c8c8c8]" />
      </div>
    </div>
  );
}
